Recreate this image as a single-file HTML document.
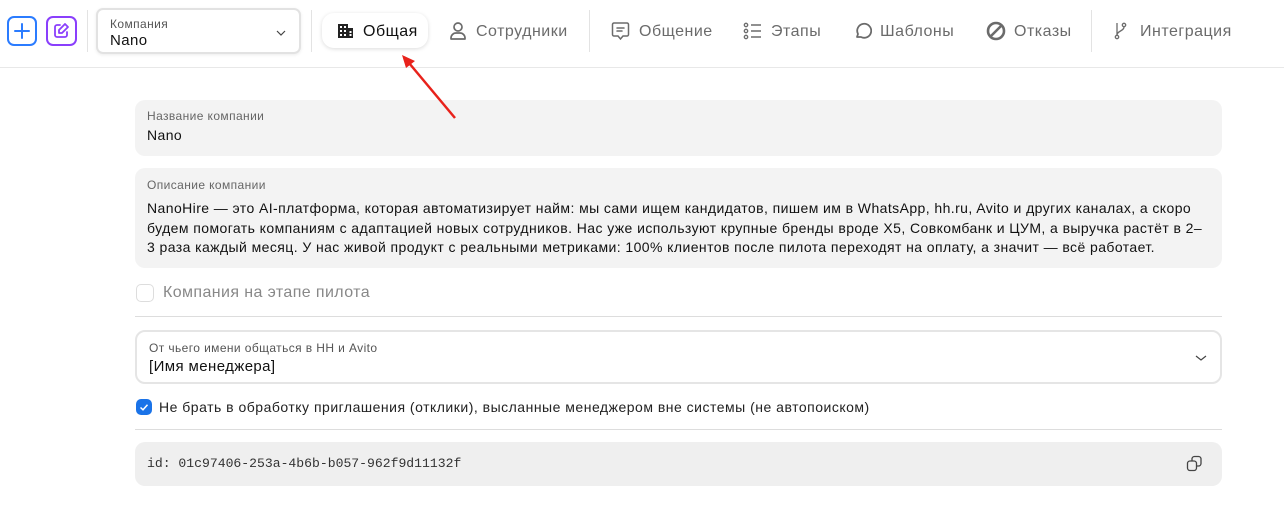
<!DOCTYPE html>
<html><head><meta charset="utf-8"><style>
*{box-sizing:border-box;margin:0;padding:0}
body{width:1284px;height:507px;background:#fff;font-family:"Liberation Sans","Noto Sans CJK SC",sans-serif;color:#111;position:relative;overflow:hidden;letter-spacing:0.4px}
.abs{position:absolute}
.hdr{position:absolute;left:0;top:0;width:1284px;height:68px;border-bottom:1px solid #e8e8e8}
.vd{position:absolute;top:10px;width:1px;height:42px;background:#e3e3e3}
.tab{position:absolute;top:21px;font-size:16px;color:#6b6b6b;line-height:22px;white-space:nowrap;letter-spacing:0.5px}
.ic{position:absolute;top:21px}
.field{position:absolute;left:135px;width:1087px;background:#f3f3f3;border-radius:10px}
.lbl{font-size:12px;color:#666}
</style></head><body>
<div class="hdr"></div>
<div class="abs" style="left:7px;top:16px;width:30px;height:30px;border:2px solid #2b7cff;border-radius:7px"><svg width="26" height="26" viewBox="0 0 26 26" style="position:absolute;left:0;top:0"><path d="M13 6v14M6 13h14" stroke="#2b7cff" stroke-width="2" stroke-linecap="round"/></svg></div>
<div class="abs" style="left:46px;top:16px;width:31px;height:30px;border:2px solid #8a3ffc;border-radius:7px"><svg width="27" height="26" viewBox="0 0 27 26" style="position:absolute;left:0;top:0"><path d="M12 7H9a2 2 0 0 0-2 2v8a2 2 0 0 0 2 2h8a2 2 0 0 0 2-2v-3" fill="none" stroke="#8a3ffc" stroke-width="1.8" stroke-linecap="round"/><path d="M17 6l3 3-6 6h-3v-3z" fill="none" stroke="#8a3ffc" stroke-width="1.8" stroke-linejoin="round"/></svg></div>
<div class="vd" style="left:87px"></div>
<div class="abs" style="left:96px;top:8px;width:205px;height:46px;border:2px solid #e2e2e2;border-radius:7px;box-shadow:0 1px 3px rgba(0,0,0,.08)">
<div style="position:absolute;left:12px;top:7px;font-size:12px;color:#555">Компания</div>
<div style="position:absolute;left:12px;top:22px;font-size:15px;color:#111">Nano</div>
<svg width="12" height="8" style="position:absolute;left:177px;top:19px"><path d="M2 2l4 4 4-4" fill="none" stroke="#444" stroke-width="1.2"/></svg>
</div>
<div class="vd" style="left:311px"></div>
<div class="abs" style="left:322px;top:13px;width:106px;height:35px;background:#fff;border-radius:12px;box-shadow:0 1px 4px rgba(0,0,0,.14)"></div>
<svg class="ic" style="left:337px;top:23px" width="17" height="16" viewBox="0 0 17 16"><rect x="1" y="1" width="10" height="14" fill="#222"/><rect x="11" y="5" width="5" height="10" fill="#222"/><g fill="#fff"><rect x="3" y="3" width="2" height="2"/><rect x="7" y="3" width="2" height="2"/><rect x="3" y="7" width="2" height="2"/><rect x="7" y="7" width="2" height="2"/><rect x="3" y="11" width="2" height="2"/><rect x="7" y="11" width="2" height="2"/><rect x="12.5" y="8" width="2" height="2"/><rect x="12.5" y="11" width="2" height="2"/></g></svg>
<div class="tab" style="left:363px;color:#111">Общая</div>
<svg class="ic" style="left:449px" width="18" height="20" viewBox="0 0 18 20"><circle cx="9" cy="6" r="4" fill="none" stroke="#6b6b6b" stroke-width="1.7"/><path d="M2 18v-1a5 5 0 0 1 5-5h4a5 5 0 0 1 5 5v1z" fill="none" stroke="#6b6b6b" stroke-width="1.7" stroke-linejoin="round"/></svg>
<div class="tab" style="left:476px">Сотрудники</div>
<div class="vd" style="left:589px"></div>
<svg class="ic" style="left:611px" width="19" height="20" viewBox="0 0 19 20"><path d="M3 2h13a1.5 1.5 0 0 1 1.5 1.5v10a1.5 1.5 0 0 1-1.5 1.5h-4l-2.5 3-2.5-3H3a1.5 1.5 0 0 1-1.5-1.5v-10A1.5 1.5 0 0 1 3 2z" fill="none" stroke="#6b6b6b" stroke-width="1.5"/><path d="M6 7h7M6 10h5" stroke="#6b6b6b" stroke-width="1.5" stroke-linecap="round"/></svg>
<div class="tab" style="left:639px">Общение</div>
<svg class="ic" style="left:743px" width="19" height="20" viewBox="0 0 19 20"><g fill="none" stroke="#6b6b6b" stroke-width="1.3"><circle cx="3" cy="4" r="1.7"/><circle cx="3" cy="10" r="1.7"/><circle cx="3" cy="16" r="1.7"/></g><path d="M8 4h10M8 10h10M8 16h10" stroke="#6b6b6b" stroke-width="1.5"/></svg>
<div class="tab" style="left:771px">Этапы</div>
<svg class="ic" style="left:853px" width="19" height="20" viewBox="0 0 19 20"><path d="M4 16l1-3a7 7 0 1 1 3 3z" fill="none" stroke="#6b6b6b" stroke-width="1.8" stroke-linejoin="round"/></svg>
<div class="tab" style="left:880px">Шаблоны</div>
<svg class="ic" style="left:986px" width="20" height="20" viewBox="0 0 20 20"><circle cx="10" cy="10" r="8" fill="none" stroke="#6b6b6b" stroke-width="2.6"/><path d="M5 15L15 5" stroke="#6b6b6b" stroke-width="2.6"/></svg>
<div class="tab" style="left:1014px">Отказы</div>
<div class="vd" style="left:1091px"></div>
<svg class="ic" style="left:1113px" width="18" height="20" viewBox="0 0 18 20"><g fill="none" stroke="#6b6b6b" stroke-width="1.3"><circle cx="4" cy="16" r="1.7"/><circle cx="11" cy="4" r="1.7"/><path d="M4 2v12M11 6c0 4-7 4-7 8"/></g></svg>
<div class="tab" style="left:1140px">Интеграция</div>

<div class="field" style="top:100px;height:56px"><div class="lbl" style="position:absolute;left:12px;top:9px">Название компании</div><div style="position:absolute;left:12px;top:27px;font-size:14px">Nano</div></div>
<div class="field" style="top:168px;height:100px"><div class="lbl" style="position:absolute;left:12px;top:10px">Описание компании</div><div style="position:absolute;left:12px;top:31px;font-size:14px;line-height:19.5px;letter-spacing:0.42px;white-space:nowrap">NanoHire — это AI-платформа, которая автоматизирует найм: мы сами ищем кандидатов, пишем им в WhatsApp, hh.ru, Avito и других каналах, а скоро<br>будем помогать компаниям с адаптацией новых сотрудников. Нас уже используют крупные бренды вроде X5, Совкомбанк и ЦУМ, а выручка растёт в 2–<br>3 раза каждый месяц. У нас живой продукт с реальными метриками: 100% клиентов после пилота переходят на оплату, а значит — всё работает.</div></div>
<div class="abs" style="left:136px;top:284px;width:18px;height:18px;border:1.5px solid #ddd;border-radius:5px"></div>
<div class="abs" style="left:163px;top:284px;font-size:16px;color:#888">Компания на этапе пилота</div>
<div class="abs" style="left:135px;top:316px;width:1087px;height:1px;background:#ddd"></div>
<div class="abs" style="left:135px;top:330px;width:1087px;height:54px;border:2px solid #e5e5e5;border-radius:10px">
<div style="position:absolute;left:12px;top:9px;font-size:12px;color:#555">От чьего имени общаться в HH и Avito</div>
<div style="position:absolute;left:12px;top:26px;font-size:15px">[Имя менеджера]</div>
<svg width="12" height="8" style="position:absolute;left:1058px;top:22px"><path d="M1 2l5 4 5-4" fill="none" stroke="#444" stroke-width="1.2"/></svg>
</div>
<div class="abs" style="left:136px;top:399px;width:16px;height:16px;background:#1a73e8;border-radius:5px"><svg width="16" height="16"><path d="M4.5 8.5l2.5 2.3 4.5-5" fill="none" stroke="#fff" stroke-width="1.5"/></svg></div>
<div class="abs" style="left:159px;top:399px;font-size:14px;color:#222;letter-spacing:0.5px">Не брать в обработку приглашения (отклики), высланные менеджером вне системы (не автопоиском)</div>
<div class="abs" style="left:135px;top:429px;width:1087px;height:1px;background:#ddd"></div>
<div class="abs" style="left:135px;top:442px;width:1087px;height:44px;background:#efefef;border-radius:10px">
<div style="position:absolute;left:12px;top:14px;font-family:'Liberation Mono',monospace;font-size:13.1px;letter-spacing:0;color:#333">id: 01c97406-253a-4b6b-b057-962f9d11132f</div>
<svg width="18" height="18" style="position:absolute;left:1051px;top:13px" viewBox="0 0 18 18"><rect x="1.5" y="6" width="9" height="9.5" rx="2.5" fill="none" stroke="#444" stroke-width="1.3"/><path d="M6 6V4a2.5 2.5 0 0 1 2.5-2.5h4A2.5 2.5 0 0 1 15 4v4.5a2.5 2.5 0 0 1-2.5 2.5h-2" fill="none" stroke="#444" stroke-width="1.3"/></svg>
</div>
<svg class="abs" style="left:390px;top:45px;z-index:5" width="80" height="80"><path d="M65 73L14 12" stroke="#e8221b" stroke-width="2.5"/><path d="M12 10l13 6-9 7z" fill="#e8221b"/></svg>
</body></html>
